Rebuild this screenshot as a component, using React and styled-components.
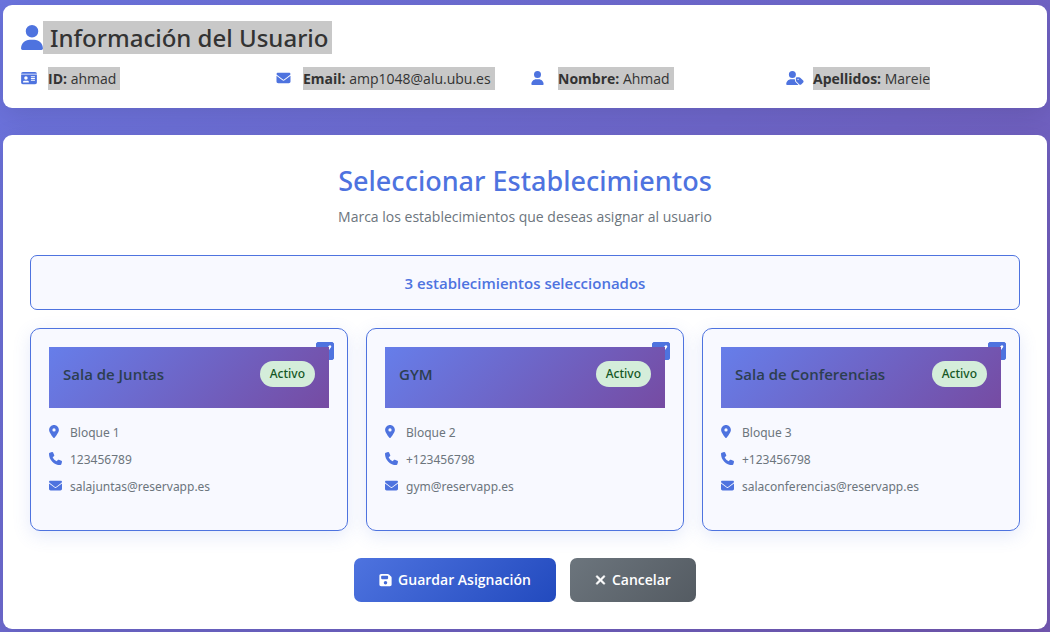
import React, { useState } from "react";
import styled, { createGlobalStyle } from "styled-components";
import {
  FaUser,
  FaIdCard,
  FaEnvelope,
  FaUserTag,
  FaLocationDot,
  FaPhone,
  FaFloppyDisk,
  FaXmark,
} from "react-icons/fa6";

const bodyFont = `"Segoe UI", "Open Sans", "Noto Sans", sans-serif`;
const displayFont = `"Segoe UI", "Noto Sans", "Open Sans", sans-serif`;

const GlobalStyle = createGlobalStyle`
  *, *::before, *::after { box-sizing: border-box; }
  body {
    margin: 0;
    min-height: 100vh;
    background: linear-gradient(135deg, #6b74de 0%, #6e66ca 50%, #7358b2 100%);
    color: #333;
    font-family: ${bodyFont};
    font-size: 14px;
    line-height: 20px;
  }
  h1, h2, h3, p, ul { margin: 0; padding: 0; }
`;

const Page = styled.main`
  display: flex;
  flex-direction: column;
  gap: 27px;
  padding: 5px 3px 3px;
`;

const Panel = styled.section`
  padding: ${({ $inset }) => $inset};
  background: #fff;
  border-radius: 9px;
  box-shadow: 0 7px 28px rgba(0, 0, 0, 0.1);
`;

const UserTitle = styled.h1`
  display: flex;
  align-items: center;
  color: #333;
  font-family: ${displayFont};
  font-size: 24px;
  font-weight: 500;
  line-height: 33px;

  svg {
    width: 22px;
    height: 25px;
    color: #4e73df;
  }
`;

const Mark = styled.mark`
  padding: ${({ $pad }) => $pad};
  background: #c8c8c8;
  color: #333;
`;

const InfoGrid = styled.ul`
  display: grid;
  grid-template-columns: repeat(4, 1fr);
  gap: 12px;
  margin-top: 13px;
  list-style: none;
`;

const InfoItem = styled.li`
  display: flex;
  align-items: center;
  gap: 9px;
  line-height: 23px;
  white-space: nowrap;
`;

const IconSlot = styled.span`
  display: flex;
  width: ${({ $width }) => $width}px;
  padding-bottom: ${({ $lift }) => $lift}px;
  color: #4e73df;

  svg {
    flex: none;
    width: ${({ $icon }) => $icon}px;
    height: ${({ $size }) => $size}px;
  }
`;

const SectionTitle = styled.h2`
  color: #4e73df;
  font-family: ${displayFont};
  font-size: 27px;
  font-weight: 500;
  line-height: 38px;
  text-align: center;
`;

const Subtitle = styled.p`
  margin-top: 7px;
  color: #6c757d;
  text-align: center;
`;

const Counter = styled.p`
  margin-top: 28px;
  padding: 17px 16px 15px;
  border: 1px solid #4e73df;
  border-radius: 7px;
  background: #f8f9ff;
  color: #4e73df;
  font-size: 15px;
  font-weight: 600;
  line-height: 21px;
  text-align: center;
`;

const CardGrid = styled.div`
  display: grid;
  grid-template-columns: repeat(3, 1fr);
  gap: 18px;
  margin-top: 18px;
`;

const Card = styled.article`
  position: relative;
  padding: 18px 18px 33px;
  border: 1px solid #4e73df;
  border-radius: 10px;
  background: #f8f9ff;
  box-shadow: 0 5px 18px rgba(78, 115, 223, 0.15);
`;

const CheckHolder = styled.span`
  position: absolute;
  top: 13px;
  right: 13px;
  width: 18px;
  height: 18px;

  svg {
    position: absolute;
    inset: 0;
    pointer-events: none;
  }
`;

const Check = styled.input`
  appearance: none;
  display: block;
  width: 18px;
  height: 18px;
  margin: 0;
  border: 1px solid #4e73df;
  border-radius: 2px;
  background: #fff;

  &:checked { background: #4e73df; }
`;

const CardHeader = styled.header`
  position: relative;
  display: flex;
  justify-content: space-between;
  align-items: flex-start;
  padding: 14px 14px 21px;
  background: linear-gradient(135deg, #667eea 0%, #764ba2 100%);
`;

const CardTitle = styled.h3`
  font-size: 15px;
  font-weight: 600;
  line-height: 26px;

  label { color: #2c3e50; }
`;

const Badge = styled.span`
  padding: 0 10px;
  border-radius: 13px;
  background: #d4edda;
  color: #155724;
  font-family: ${displayFont};
  font-size: 12px;
  font-weight: 500;
  line-height: 26px;
`;

const Details = styled.ul`
  display: flex;
  flex-direction: column;
  gap: 7px;
  margin-top: 15px;
  color: #6c757d;
  font-family: ${displayFont};
  font-size: 12px;
  list-style: none;
`;

const Detail = styled.li`
  display: flex;
  align-items: center;
  gap: 7px;
`;

const Actions = styled.div`
  display: flex;
  justify-content: center;
  gap: 14px;
  margin-top: 27px;
`;

const Button = styled.button`
  display: inline-flex;
  align-items: center;
  gap: 6px;
  padding: 12px 25px;
  border: 0;
  border-radius: 7px;
  background: linear-gradient(135deg, ${({ $from }) => $from}, ${({ $to }) => $to});
  color: #fff;
  font-family: inherit;
  font-size: 14px;
  font-weight: 600;
  line-height: 20px;
  cursor: pointer;

  svg {
    width: ${({ $icon }) => $icon}px;
    height: 14px;
    overflow: visible;
    stroke-width: ${({ $stroke = 0 }) => $stroke};
  }
`;

const userFields = [
  { label: "ID:", value: "ahmad", icon: FaIdCard, width: 16 },
  { label: "Email:", value: "amp1048@alu.ubu.es", icon: FaEnvelope, width: 15 },
  { label: "Nombre:", value: "Ahmad", icon: FaUser, width: 13 },
  { label: "Apellidos:", value: "Mareie", icon: FaUserTag, width: 18 },
];

const places = [
  { id: "juntas", name: "Sala de Juntas", address: "Bloque 1", phone: "123456789", email: "salajuntas@reservapp.es" },
  { id: "gym", name: "GYM", address: "Bloque 2", phone: "+123456798", email: "gym@reservapp.es" },
  { id: "conferencias", name: "Sala de Conferencias", address: "Bloque 3", phone: "+123456798", email: "salaconferencias@reservapp.es" },
];

function DetailRow({ icon: Icon, width = 13, children }) {
  return (
    <Detail>
      <IconSlot $width={14} $icon={width} $size={13} $lift={4}><Icon /></IconSlot>
      {children}
    </Detail>
  );
}

function PlaceCard({ place, checked, onToggle }) {
  return (
    <Card>
      <CheckHolder>
        <Check id={place.id} type="checkbox" checked={checked} onChange={onToggle} />
        {checked && (
          <svg viewBox="0 0 18 18" width="18" height="18" aria-hidden="true">
            <path d="M5 9l3.500 3 5.500-7.500" fill="none" stroke="#fff" strokeWidth="2.600" strokeLinecap="round" strokeLinejoin="round" />
          </svg>
        )}
      </CheckHolder>
      <CardHeader>
        <CardTitle><label htmlFor={place.id}>{place.name}</label></CardTitle>
        <Badge>Activo</Badge>
      </CardHeader>
      <Details>
        <DetailRow icon={FaLocationDot} width={10}>{place.address}</DetailRow>
        <DetailRow icon={FaPhone}>{place.phone}</DetailRow>
        <DetailRow icon={FaEnvelope}>{place.email}</DetailRow>
      </Details>
    </Card>
  );
}

export default function App() {
  const [selected, setSelected] = useState(places.map((p) => p.id));
  const toggle = (id) =>
    setSelected((ids) => (ids.includes(id) ? ids.filter((i) => i !== id) : [...ids, id]));

  return (
    <>
      <GlobalStyle />
      <Page>
        <Panel $inset="16px 18px 18px">
          <UserTitle>
            <FaUser />
            <Mark $pad="0 4px 0 7px">Información del Usuario</Mark>
          </UserTitle>
          <InfoGrid>
            {userFields.map(({ label, value, icon: Icon, width }, i) => (
              <InfoItem key={label}>
                <IconSlot $width={18} $icon={width} $size={14} $lift={2}><Icon /></IconSlot>
                <Mark $pad={i < userFields.length - 1 ? "0 4px 0 0" : "0"}>
                  <strong>{label}</strong> {value}
                </Mark>
              </InfoItem>
            ))}
          </InfoGrid>
        </Panel>

        <Panel $inset="27px">
          <SectionTitle>Seleccionar Establecimientos</SectionTitle>
          <Subtitle>Marca los establecimientos que deseas asignar al usuario</Subtitle>
          <Counter>{selected.length} establecimientos seleccionados</Counter>
          <CardGrid>
            {places.map((place) => (
              <PlaceCard
                key={place.id}
                place={place}
                checked={selected.includes(place.id)}
                onToggle={() => toggle(place.id)}
              />
            ))}
          </CardGrid>
          <Actions>
            <Button type="button" $icon={13} $from="#4e73df" $to="#224abe"><FaFloppyDisk />Guardar Asignación</Button>
            <Button type="button" $icon={11} $stroke={20} $from="#6c757d" $to="#545b62"><FaXmark />Cancelar</Button>
          </Actions>
        </Panel>
      </Page>
    </>
  );
}
